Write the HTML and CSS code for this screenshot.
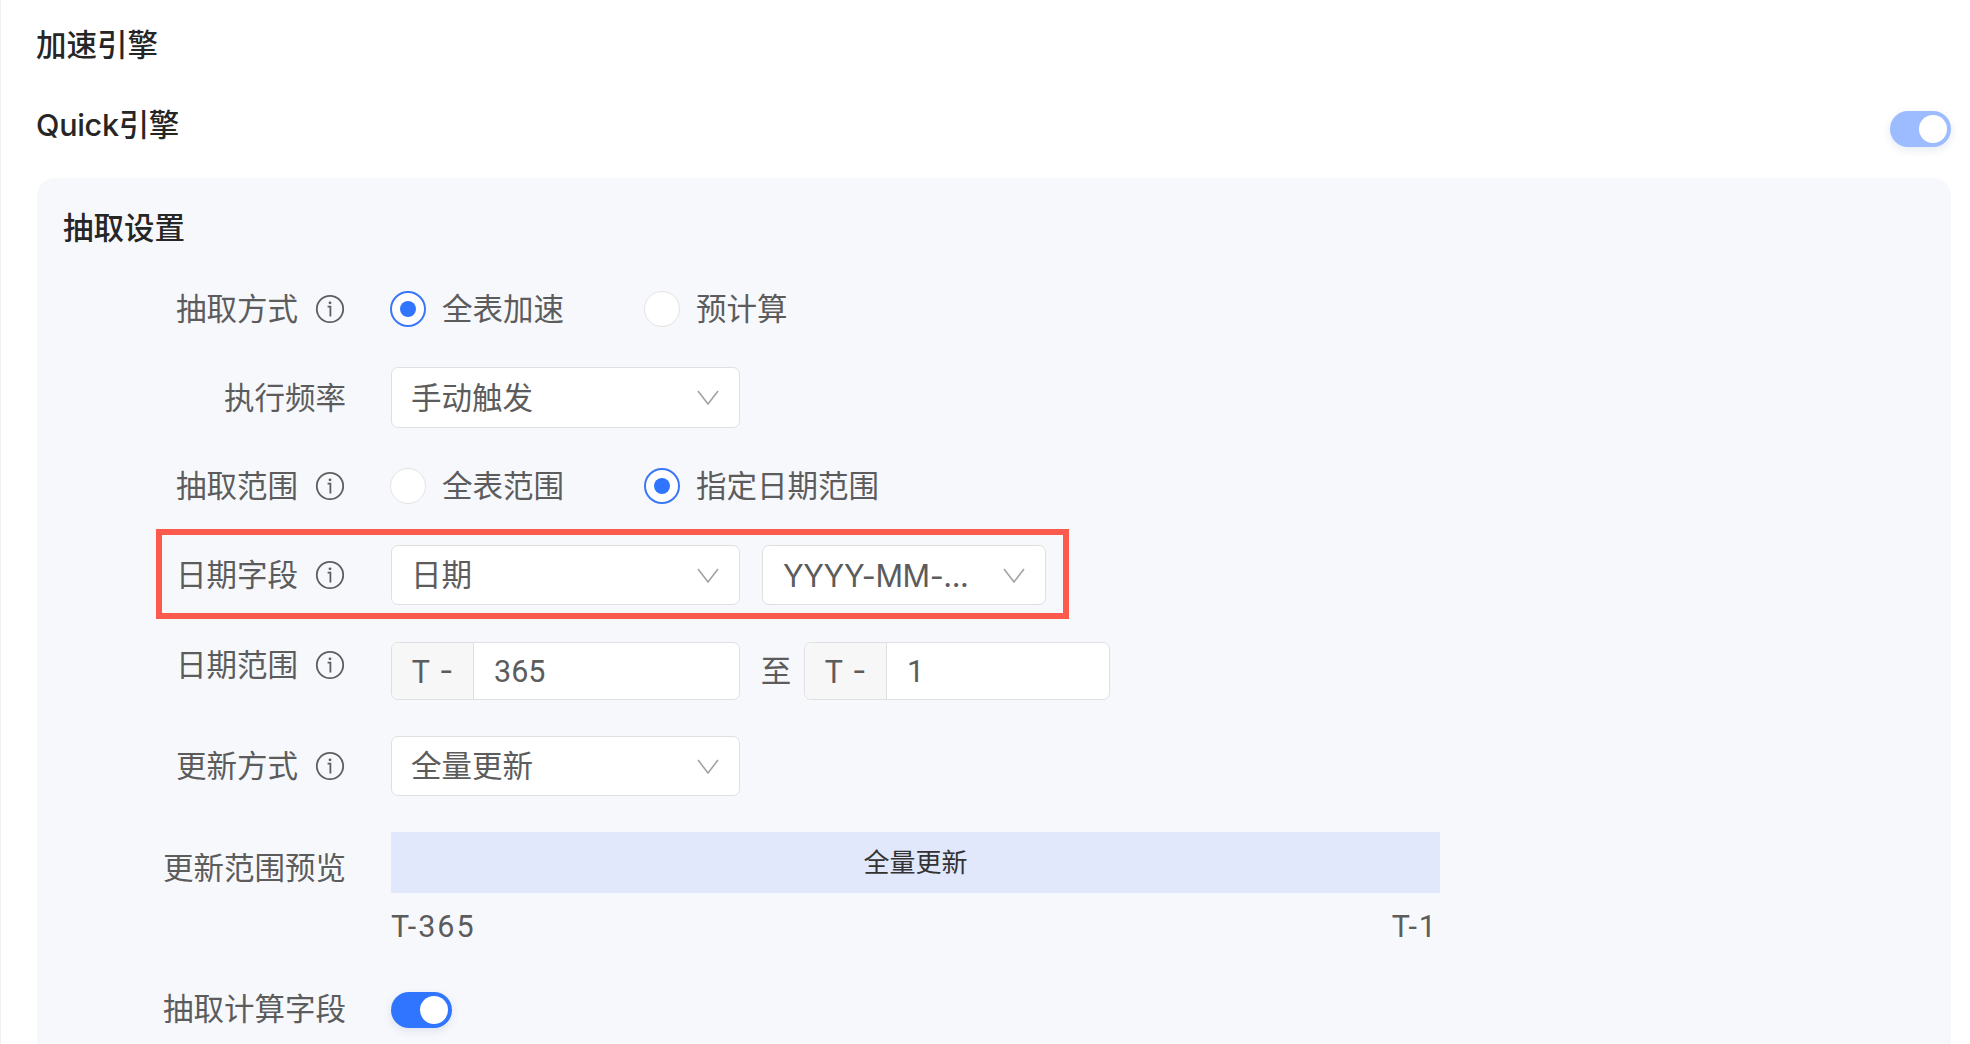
FILE: index.html
```html
<!DOCTYPE html>
<html lang="zh-CN">

<head>
    <meta charset="UTF-8">
    <title>加速引擎</title>
    <link rel="stylesheet" href="styles.css">
</head>

<body>

    <svg class="icon-defs" width="0" height="0">
        <symbol id="info" viewBox="0 0 30 30">
            <circle cx="15" cy="15" r="13.2" fill="none" stroke="currentColor" stroke-width="1.8" />
            <circle cx="15" cy="8.8" r="1.4" fill="currentColor" />
            <path d="M12.6 12.6H15.4V22.4" fill="none" stroke="currentColor" stroke-width="1.8" />
        </symbol>
        <symbol id="chevron" viewBox="0 0 22 15">
            <path d="M1 1L11 14L21 1" fill="none" stroke="currentColor" stroke-width="1.6" />
        </symbol>
    </svg>

    <div class="page">
        <h2 class="page-title">加速引擎</h2>

        <div class="engine-head">
            <h3 class="engine-title">Quick引擎</h3>
            <span class="switch switch-faded"><i></i></span>
        </div>

        <div class="panel">
            <h4 class="panel-title">抽取设置</h4>

            <!-- extract mode -->
            <div class="row row-mode">
                <div class="label">抽取方式<svg class="info"><use href="#info" /></svg></div>
                <div class="radios">
                    <label class="radio checked"><i></i>全表加速</label>
                    <label class="radio"><i></i>预计算</label>
                </div>
            </div>

            <div class="row row-freq">
                <div class="label">执行频率</div>
                <div class="select">手动触发<svg class="chevron"><use href="#chevron" /></svg></div>
            </div>

            <div class="row row-range">
                <div class="label">抽取范围<svg class="info"><use href="#info" /></svg></div>
                <div class="radios">
                    <label class="radio"><i></i>全表范围</label>
                    <label class="radio checked"><i></i>指定日期范围</label>
                </div>
            </div>

            <!-- date field, has the red marker round it -->
            <div class="row row-date">
                <div class="marker"></div>
                <div class="label">日期字段<svg class="info"><use href="#info" /></svg></div>
                <div class="select">日期<svg class="chevron"><use href="#chevron" /></svg></div>
                <div class="select select-small">YYYY-MM-...<svg class="chevron"><use href="#chevron" /></svg></div>
            </div>

            <div class="row row-dates">
                <div class="label">日期范围<svg class="info"><use href="#info" /></svg></div>
                <div class="input-group">
                    <span class="addon">T -</span>
                    <span class="value">365</span>
                </div>
                <span class="to">至</span>
                <div class="input-group input-group-small">
                    <span class="addon">T -</span>
                    <span class="value">1</span>
                </div>
            </div>

            <div class="row row-update">
                <div class="label">更新方式<svg class="info"><use href="#info" /></svg></div>
                <div class="select">全量更新<svg class="chevron"><use href="#chevron" /></svg></div>
            </div>

            <div class="row row-preview">
                <div class="label">更新范围预览</div>
                <div class="preview">
                    <div class="preview-bar">全量更新</div>
                    <div class="preview-ends">
                        <span>T-365</span>
                        <span>T-1</span>
                    </div>
                </div>
            </div>

            <div class="row row-calc">
                <div class="label">抽取计算字段</div>
                <span class="switch"><i></i></span>
            </div>
        </div>
    </div>

</body>

</html>
```

FILE: styles.css
```css
* {
    box-sizing: border-box;
}

html,
body {
    height: 100%;
}

body {
    margin: 0;
    overflow: hidden;
    background: #fff;
    color: #5c5c5c;
    font-family: Inter, "Noto Sans CJK SC", sans-serif;
    font-size: 30.5px;
}

.icon-defs {
    display: block;
    height: 0;
}

.page {
    height: 1044px;
    padding: 23px 19px 0 35px;
    border-left: 1px solid #f0f0f0;
    display: flex;
    flex-direction: column;
}

h2,
h3,
h4 {
    margin: 0;
    font-size: 30.5px;
    font-weight: 500;
    color: #262626;
    line-height: 44px;
}

.engine-title {
    letter-spacing: -0.3px;
}

.engine-head {
    display: flex;
    justify-content: space-between;
    align-items: center;
    margin-top: 36px;
    height: 44px;
}

.engine-head .switch {
    margin-top: 8px;
}

.panel {
    margin-top: 31px;
    margin-left: 1px;
    flex: 1;
    background: #f7f8fc;
    border-radius: 18px 18px 0 0;
    padding: 28px 27px 0 26px;
}

/* form rows */
.row {
    position: relative;
    display: flex;
    align-items: center;
    margin-left: -26px;
}

.row-mode {
    margin-top: 41px;
    height: 36px;
}

.row-freq {
    margin-top: 40px;
    height: 61px;
}

.row-range {
    margin-top: 40px;
    height: 36px;
}

.row-date {
    margin-top: 41px;
    height: 60px;
}

.row-dates {
    margin-top: 37px;
    height: 58px;
    align-items: flex-start;
}

.row-dates .label {
    height: 46px;
}

.row-update {
    margin-top: 36px;
    height: 60px;
}

.row-preview {
    margin-top: 36px;
    align-items: flex-start;
}

.row-preview .label {
    height: 72px;
}

.row-calc {
    margin-top: 47px;
    height: 36px;
}

.row-calc .label {
    padding-bottom: 6px;
}

/* the CJK glyphs sit low in the line, so text is lifted and icons pushed back */
.label {
    width: 354px;
    padding-right: 45px;
    padding-bottom: 4px;
    flex: none;
    display: flex;
    justify-content: flex-end;
    align-items: center;
    white-space: nowrap;
}

.label .info {
    width: 30px;
    height: 30px;
    margin-top: 4px;
    margin-left: 17px;
    margin-right: 1px;
    color: #5e5e5e;
}

.radios {
    display: flex;
    gap: 78px;
}

.radio {
    display: flex;
    align-items: center;
    gap: 16px;
    width: 176px;
    height: 36px;
    margin-left: -1px;
    margin-right: 1px;
    padding-bottom: 4px;
    white-space: nowrap;
}

.radio i {
    width: 36px;
    height: 36px;
    margin-top: 4px;
    border-radius: 50%;
    background: #fff;
    border: 1px solid #e3e3e3;
    flex: none;
}

.radio.checked i {
    border: 2px solid #3a78f8;
    position: relative;
}

.radio.checked i::after {
    content: "";
    position: absolute;
    left: 8px;
    top: 8px;
    width: 16px;
    height: 16px;
    border-radius: 50%;
    background: #2f75ff;
}

.select {
    width: 349px;
    height: 100%;
    padding: 0 20px 4px 19px;
    background: #fff;
    border: 1px solid #e0e0e0;
    border-radius: 7px;
    display: flex;
    justify-content: space-between;
    align-items: center;
    flex: none;
    white-space: nowrap;
}

.select-small {
    width: 284px;
    margin-left: 22px;
    padding-left: 20px;
    padding-bottom: 0;
    letter-spacing: -0.4px;
}

.chevron {
    width: 22px;
    height: 15px;
    margin-top: 4px;
    color: #a3a3a3;
    flex: none;
}

.select-small .chevron {
    margin-top: 0;
}

.input-group {
    width: 349px;
    height: 100%;
    display: flex;
    background: #fff;
    border: 1px solid #e0e0e0;
    border-radius: 7px;
    overflow: hidden;
}

.input-group-small {
    width: 306px;
}

.addon {
    width: 82px;
    padding-left: 19px;
    background: #f7f7f7;
    border-right: 1px solid #e0e0e0;
    display: flex;
    align-items: center;
    flex: none;
}

.value {
    padding-left: 20px;
    display: flex;
    align-items: center;
    font-family: Roboto, sans-serif;
}

.to {
    width: 64px;
    padding-left: 8px;
    text-align: center;
    height: 100%;
    line-height: 58px;
    flex: none;
}

.preview {
    width: 1049px;
}

.preview-bar {
    height: 61px;
    background: #e2e8fc;
    color: #333;
    font-size: 26px;
    line-height: 61px;
    text-align: center;
}

.preview-ends {
    display: flex;
    justify-content: space-between;
    padding-right: 2px;
    margin-top: 16px;
    line-height: 36px;
    font-family: Roboto, sans-serif;
    letter-spacing: 2px;
}

/* red annotation drawn over the date field row */
.marker {
    position: absolute;
    left: 119px;
    top: -16px;
    width: 913px;
    height: 90px;
    border: 6px solid #fb5a4d;
}

.switch {
    width: 61px;
    height: 36px;
    border-radius: 18px;
    background: #2f75ff;
    display: block;
    position: relative;
    flex: none;
    box-shadow: 0 3px 8px rgba(40, 70, 140, 0.12);
}

.switch i {
    position: absolute;
    right: 4px;
    top: 4px;
    width: 28px;
    height: 28px;
    border-radius: 50%;
    background: #fff;
}

.switch-faded {
    background: #9dbcff;
}
```
